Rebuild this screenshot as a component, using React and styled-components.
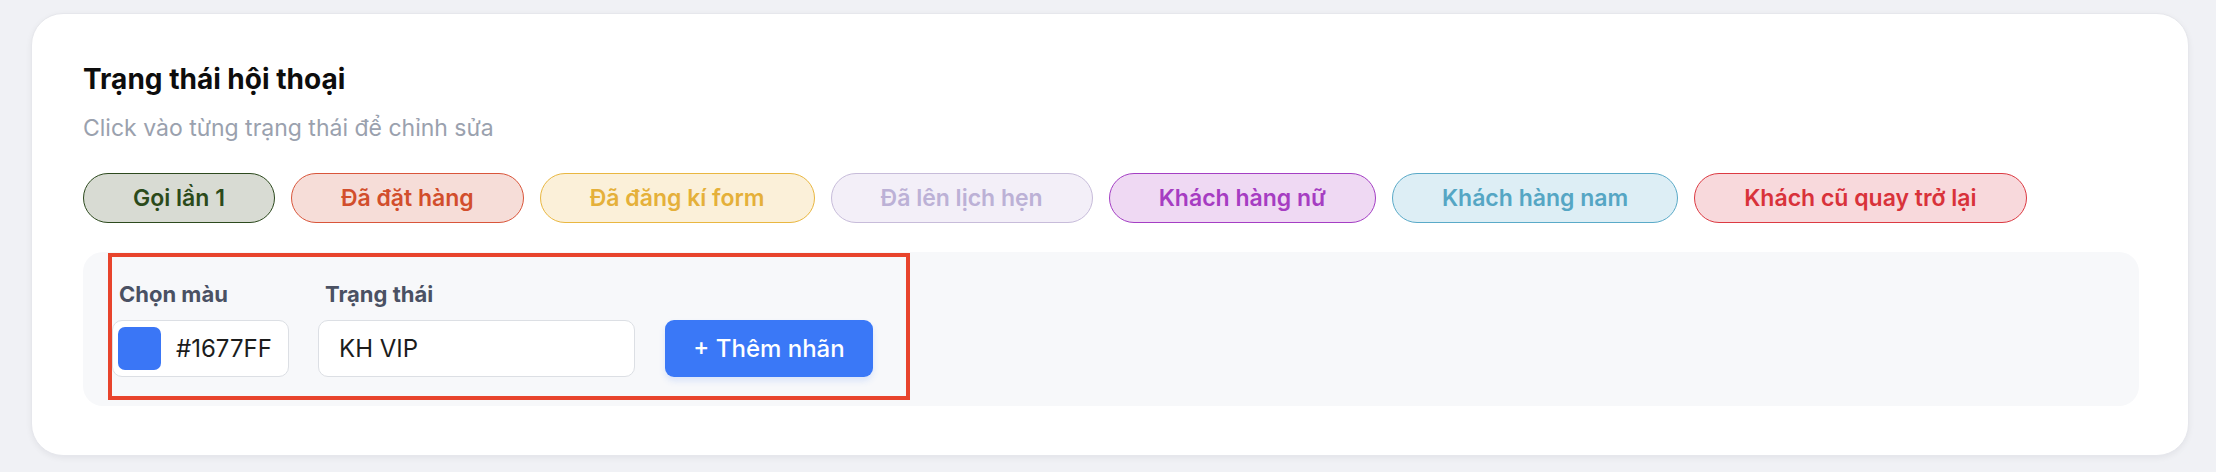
import React from 'react';
import styled, { createGlobalStyle } from 'styled-components';

const GlobalStyle = createGlobalStyle`
  * {
    box-sizing: border-box;
  }
  body {
    margin: 0;
    background: #f0f1f5;
    font-family: 'Inter', 'Noto Sans', sans-serif;
  }
`;

const Page = styled.div`
  padding: 13px 27px 15px 31px;
`;

const Card = styled.section`
  background: #ffffff;
  border: 1px solid #e6e7ec;
  border-radius: 32px;
  box-shadow: 0 2px 6px rgba(20, 24, 40, 0.06);
  padding: 49px 49px 49px 51px;
`;

const Title = styled.h2`
  margin: 0;
  font-size: 28px;
  font-weight: 700;
  color: #0d0d0d;
  line-height: 1.21;
`;

const Subtitle = styled.p`
  margin: 18px 0 0;
  font-size: 23px;
  color: #9aa1ae;
  line-height: 1.21;
`;

const ChipRow = styled.div`
  display: flex;
  gap: 16px;
  margin-top: 30px;
`;

const Chip = styled.button`
  display: inline-flex;
  align-items: center;
  justify-content: center;
  height: 50px;
  padding: 0 49px;
  border-radius: 999px;
  border: 1.5px solid ${(p) => p.$border};
  background: ${(p) => p.$bg};
  color: ${(p) => p.$color};
  font-family: inherit;
  font-size: 23px;
  font-weight: 600;
  cursor: pointer;
`;

const Panel = styled.div`
  position: relative;
  margin-top: 29px;
  background: #f7f8fa;
  border-radius: 20px;
  padding: 29px;
`;

const FormRow = styled.div`
  display: flex;
  align-items: flex-end;
  gap: 29px;
`;

const Field = styled.div`
  display: flex;
  flex-direction: column;
  gap: 13px;
`;

const Label = styled.label`
  padding-left: 7px;
  font-size: 22px;
  font-weight: 700;
  color: #4a5163;
  line-height: 1.21;
`;

const ColorBox = styled.div`
  display: flex;
  align-items: center;
  gap: 15px;
  width: 177px;
  height: 57px;
  padding: 5px;
  background: #ffffff;
  border: 1px solid #dcdfe4;
  border-radius: 10px;
`;

const Swatch = styled.span`
  width: 43px;
  height: 43px;
  border-radius: 7px;
  background: ${(p) => p.$color};
`;

const HexText = styled.span`
  font-size: 24px;
  color: #1c1c1c;
`;

const TextInput = styled.input`
  width: 317px;
  height: 57px;
  padding: 0 20px;
  background: #ffffff;
  border: 1px solid #dcdfe4;
  border-radius: 10px;
  font-family: inherit;
  font-size: 24px;
  color: #1c1c1c;
  outline: none;
`;

const AddButton = styled.button`
  width: 208px;
  height: 57px;
  margin-left: 1px;
  border: none;
  border-radius: 9px;
  background: #3a78f7;
  box-shadow: 0 4px 6px rgba(58, 120, 247, 0.15);
  color: #ffffff;
  font-family: inherit;
  font-size: 24px;
  font-weight: 500;
  cursor: pointer;
`;

// red annotation drawn over the form
const Highlight = styled.div`
  position: absolute;
  left: 25px;
  top: 1px;
  width: 802px;
  height: 147px;
  border: 4px solid #e8442c;
  pointer-events: none;
`;

const statuses = [
  { label: 'Gọi lần 1', bg: '#d8dbd3', border: '#2d4a1e', color: '#2b4a1a' },
  { label: 'Đã đặt hàng', bg: '#f6ddd8', border: '#d9553a', color: '#d24e2c' },
  { label: 'Đã đăng kí form', bg: '#fbf0d9', border: '#e9b741', color: '#e5b03a' },
  { label: 'Đã lên lịch hẹn', bg: '#f3eff8', border: '#c7bcda', color: '#bcb1d6' },
  { label: 'Khách hàng nữ', bg: '#efd9f3', border: '#a43fc4', color: '#a63dc2' },
  { label: 'Khách hàng nam', bg: '#ddeef5', border: '#5aaac8', color: '#55a6c4' },
  { label: 'Khách cũ quay trở lại', bg: '#f8d9dc', border: '#dc3a42', color: '#d9323a' },
];

const App = () => {
  return (
    <Page>
      <GlobalStyle />
      <Card>
        <Title>Trạng thái hội thoại</Title>
        <Subtitle>Click vào từng trạng thái để chỉnh sửa</Subtitle>
        <ChipRow>
          {statuses.map((s) => (
            <Chip key={s.label} $bg={s.bg} $border={s.border} $color={s.color}>
              {s.label}
            </Chip>
          ))}
        </ChipRow>
        <Panel>
          <FormRow>
            <Field>
              <Label>Chọn màu</Label>
              <ColorBox>
                <Swatch $color="#3a76f6" />
                <HexText>#1677FF</HexText>
              </ColorBox>
            </Field>
            <Field>
              <Label>Trạng thái</Label>
              <TextInput defaultValue="KH VIP" />
            </Field>
            <AddButton type="button">+ Thêm nhãn</AddButton>
          </FormRow>
          <Highlight />
        </Panel>
      </Card>
    </Page>
  );
};

export default App;
